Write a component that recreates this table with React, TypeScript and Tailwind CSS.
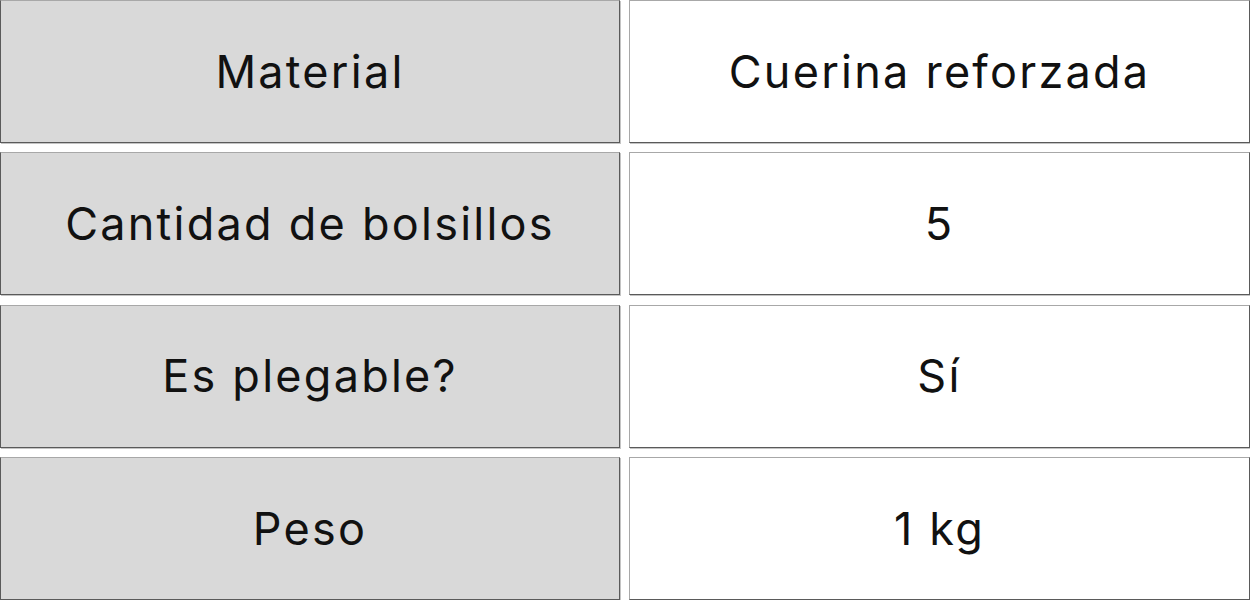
const rows = [
  { label: "Material", value: "Cuerina reforzada" },
  { label: "Cantidad de bolsillos", value: "5" },
  { label: "Es plegable?", value: "Sí" },
  { label: "Peso", value: "1 kg" },
];

export default function App() {
  return (
    <div
      className="w-[1250px] h-[600px] bg-white overflow-hidden"
      style={{ fontFamily: "Inter, 'Open Sans', sans-serif" }}
    >
      <div className="grid grid-cols-[620px_1fr] grid-rows-[repeat(4,143px)] gap-x-[9px] gap-y-[9.33px]">
        {rows.map((row, index) => (
          <div key={index} className="contents">
            <div
              className={
                "flex items-center justify-center bg-[#d9d9d9] border border-t-[#a8a8a8] border-l-[#5a5a5a] border-b-[#5a5a5a] border-r-[#5a5a5a] shadow-[1px_1px_0_#c4c4c4] text-[45px] text-[#111] tracking-[0.05em] " +
                (index === 0 ? "border-t-[#5a5a5a]" : "")
              }
            >
              {row.label}
            </div>
            <div
              className={
                "flex items-center justify-center bg-white border border-t-[#a8a8a8] border-l-[#a8a8a8] border-b-[#5a5a5a] border-r-[#5a5a5a] shadow-[1px_1px_0_#c4c4c4] text-[45px] text-[#111] tracking-[0.05em] " +
                (index === 0 ? "border-t-[#5a5a5a]" : "")
              }
            >
              {row.value}
            </div>
          </div>
        ))}
      </div>
    </div>
  );
}
